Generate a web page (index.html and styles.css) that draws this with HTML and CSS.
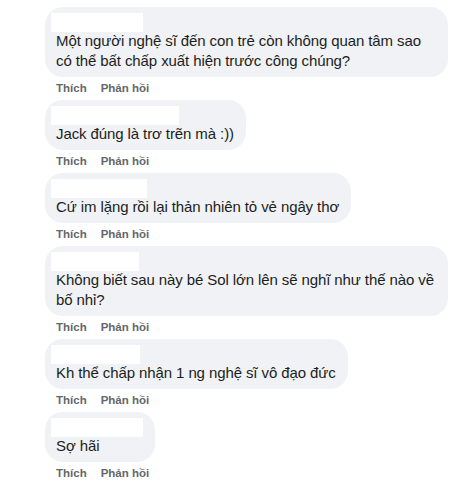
FILE: index.html
```html
<!DOCTYPE html>
<html lang="vi">
<head>
<meta charset="utf-8">
<link rel="stylesheet" href="styles.css">
</head>
<body>
<div class="list">
  <div class="comment">
    <div class="bubble">
      <div class="name n1"></div>
      <div class="text">Một người nghệ sĩ đến con trẻ còn không quan tâm sao có thể bất chấp xuất hiện trước công chúng?</div>
    </div>
    <div class="actions"><span>Thích</span><span>Phản hồi</span></div>
  </div>
  <div class="comment">
    <div class="bubble">
      <div class="name n2"></div>
      <div class="text">Jack đúng là trơ trẽn mà :))</div>
    </div>
    <div class="actions"><span>Thích</span><span>Phản hồi</span></div>
  </div>
  <div class="comment">
    <div class="bubble">
      <div class="name n3"></div>
      <div class="text">Cứ im lặng rồi lại thản nhiên tỏ vẻ ngây thơ</div>
    </div>
    <div class="actions"><span>Thích</span><span>Phản hồi</span></div>
  </div>
  <div class="comment">
    <div class="bubble">
      <div class="name n4"></div>
      <div class="text">Không biết sau này bé Sol lớn lên sẽ nghĩ như thế nào về bố nhỉ?</div>
    </div>
    <div class="actions"><span>Thích</span><span>Phản hồi</span></div>
  </div>
  <div class="comment">
    <div class="bubble">
      <div class="name n5"></div>
      <div class="text">Kh thể chấp nhận 1 ng nghệ sĩ vô đạo đức</div>
    </div>
    <div class="actions"><span>Thích</span><span>Phản hồi</span></div>
  </div>
  <div class="comment">
    <div class="bubble">
      <div class="name n6"></div>
      <div class="text">Sợ hãi</div>
    </div>
    <div class="actions"><span>Thích</span><span>Phản hồi</span></div>
  </div>
</div>
</body>
</html>
```

FILE: styles.css
```css
html, body {
  margin: 0;
  padding: 0;
  background: #ffffff;
}
body {
  font-family: "Liberation Sans", Arial, sans-serif;
  color: #1c1e21;
}
.list {
  display: flex;
  flex-direction: column;
  padding: 7px 0 0 45px;
}
.comment {
  display: flex;
  flex-direction: column;
  align-items: flex-start;
}
.bubble {
  background: #f0f2f5;
  border-radius: 18px;
  padding: 6px 12px 6px 11px;
  max-width: 380px;
}
.name {
  height: 19px;
  margin-left: -5px;
  background: #ffffff;
  margin-bottom: -1px;
}
.n1 { width: 92px; }
.n2 { width: 128px; }
.n3 { width: 96px; }
.n4 { width: 88px; }
.n5 { width: 89px; }
.n6 { width: 92px; }
.text {
  font-size: 15px;
  line-height: 20px;
  letter-spacing: -0.1px;
}
.actions {
  display: flex;
  gap: 14px;
  margin: 3px 0 4px 11px;
  font-size: 11.5px;
  line-height: 16px;
  font-weight: 700;
  color: #65676b;
}
```
